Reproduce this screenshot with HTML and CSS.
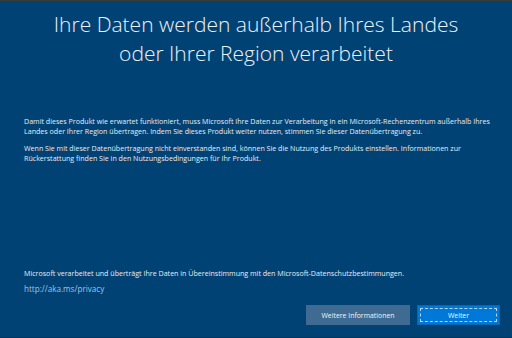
FILE: index.html
```html
<!DOCTYPE html>
<html lang="de">
<head>
    <meta charset="UTF-8">
    <meta name="viewport" content="width=device-width, initial-scale=1.0">
    <title>Datenübertragung</title>
    <link rel="stylesheet" href="styles.css">
</head>
<body>
    <div class="screen">
        <h1 class="title">Ihre Daten werden außerhalb Ihres Landes<br>oder Ihrer Region verarbeitet</h1>

        <div class="content">
            <p>Damit dieses Produkt wie erwartet funktioniert, muss Microsoft Ihre Daten zur Verarbeitung in ein Microsoft-Rechenzentrum außerhalb Ihres<br>Landes oder Ihrer Region übertragen. Indem Sie dieses Produkt weiter nutzen, stimmen Sie dieser Datenübertragung zu.</p>
            <p>Wenn Sie mit dieser Datenübertragung nicht einverstanden sind, können Sie die Nutzung des Produkts einstellen. Informationen zur<br>Rückerstattung finden Sie in den Nutzungsbedingungen für Ihr Produkt.</p>
        </div>

        <div class="footer">
            <p class="note">Microsoft verarbeitet und überträgt Ihre Daten in Übereinstimmung mit den Microsoft-Datenschutzbestimmungen.</p>
            <a class="link" href="#">http://aka.ms/privacy</a>
            <div class="buttons">
                <button class="btn btn-secondary">Weitere Informationen</button>
                <button class="btn btn-primary"><span class="focus">Weiter</span></button>
            </div>
        </div>
    </div>
</body>
</html>
```

FILE: styles.css
```css
* {
    margin: 0;
    padding: 0;
    box-sizing: border-box;
}

body {
    font-family: "Open Sans", "Liberation Sans", sans-serif;
    color: #e8edf2;
}

.screen {
    height: 338px;
    background-color: #014275;
    border-top: 1px solid #3a3a3a;
    border-bottom: 1px solid #0b2f4f;
    display: flex;
    flex-direction: column;
}

.title {
    font-weight: 300;
    font-size: 21px;
    line-height: 29px;
    text-align: center;
    color: #eef2f6;
    padding-top: 9px;
}

.content {
    padding: 48px 16px 0 24px;
    font-size: 7.1px;
    line-height: 10px;
}

.content p {
    margin-bottom: 7px;
    white-space: nowrap;
}

.footer {
    margin-top: auto;
    padding: 0 12px 12px 24px;
    font-size: 7.1px;
}

.note {
    line-height: 10px;
}

.link {
    display: block;
    margin-top: 5px;
    color: #9fc3e6;
    text-decoration: none;
    font-size: 8.1px;
    line-height: 12px;
}

.buttons {
    display: flex;
    justify-content: flex-end;
    gap: 7px;
    margin-top: 10px;
}

.btn {
    height: 20px;
    border: none;
    font-family: inherit;
    font-size: 6.9px;
    color: #f2f5f8;
}

.btn-secondary {
    width: 104px;
    background-color: #3f6b92;
}

.btn-primary {
    width: 83px;
    background-color: #0078d7;
    border: 1px solid #0a64b0;
    padding: 2px;
}

.focus {
    display: flex;
    align-items: center;
    justify-content: center;
    height: 100%;
    border: 1px dashed #b9d5ee;
}
```
